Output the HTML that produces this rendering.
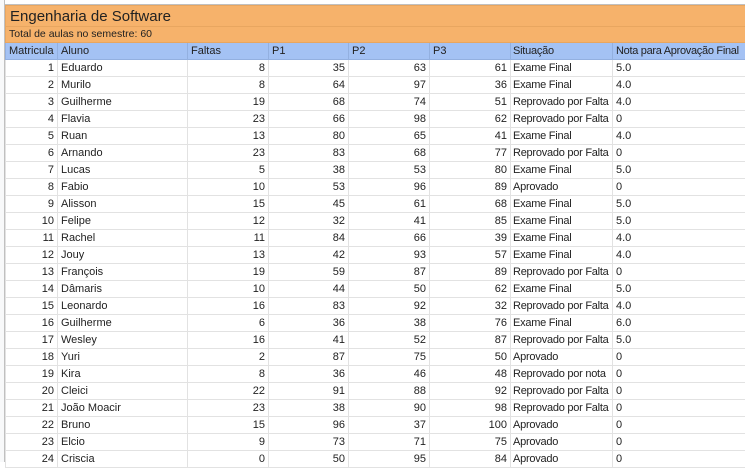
<!DOCTYPE html>
<html><head><meta charset="utf-8"><style>
*{margin:0;padding:0;box-sizing:border-box}
body{width:745px;height:462px;overflow:hidden;background:#fff;font-family:"Liberation Sans",Arial,sans-serif;color:#222;position:relative}
.lc{position:absolute;left:0;top:0;width:5px;height:462px;background:#f8f9fa;border-right:1px solid #c0c0c0}
table{position:absolute;left:5px;top:5px;width:740px;border-collapse:collapse;table-layout:fixed;font-size:11px}
td{border:1px solid #e2e2e2;height:17px;padding:0 3px;white-space:nowrap;overflow:hidden;line-height:15px}
td:nth-child(7){padding:0 2px;letter-spacing:-0.25px}
td:last-child{overflow:visible}
.h td:last-child{letter-spacing:-0.3px}
.t td{background:#f6b26b;border-color:#e8a660}
.t1 td{height:21px;font-size:15px;padding-left:4px;letter-spacing:0}
.t2 td{height:16px;font-size:10.5px;letter-spacing:0}
.h td{background:#a4c2f4;border-color:#93b0e0}
.r{text-align:right}
.top{position:absolute;left:5px;top:0;height:5px;width:740px;border-bottom:1px solid #c0c0c0}
</style></head><body>
<div class="lc"></div>
<div class="top"></div>
<table>
<colgroup><col style="width:52px"><col style="width:130px"><col style="width:81px"><col style="width:80px"><col style="width:81px"><col style="width:81px"><col style="width:102px"><col style="width:133px"></colgroup>
<tr class="t t1"><td colspan="8">Engenharia de Software</td></tr>
<tr class="t t2"><td colspan="8">Total de aulas no semestre: 60</td></tr>
<tr class="h"><td>Matricula</td><td>Aluno</td><td>Faltas</td><td>P1</td><td>P2</td><td>P3</td><td>Situação</td><td>Nota para Aprovação Final</td></tr>
<tr><td class="r">1</td><td>Eduardo</td><td class="r">8</td><td class="r">35</td><td class="r">63</td><td class="r">61</td><td>Exame Final</td><td>5.0</td></tr>
<tr><td class="r">2</td><td>Murilo</td><td class="r">8</td><td class="r">64</td><td class="r">97</td><td class="r">36</td><td>Exame Final</td><td>4.0</td></tr>
<tr><td class="r">3</td><td>Guilherme</td><td class="r">19</td><td class="r">68</td><td class="r">74</td><td class="r">51</td><td>Reprovado por Falta</td><td>4.0</td></tr>
<tr><td class="r">4</td><td>Flavia</td><td class="r">23</td><td class="r">66</td><td class="r">98</td><td class="r">62</td><td>Reprovado por Falta</td><td>0</td></tr>
<tr><td class="r">5</td><td>Ruan</td><td class="r">13</td><td class="r">80</td><td class="r">65</td><td class="r">41</td><td>Exame Final</td><td>4.0</td></tr>
<tr><td class="r">6</td><td>Arnando</td><td class="r">23</td><td class="r">83</td><td class="r">68</td><td class="r">77</td><td>Reprovado por Falta</td><td>0</td></tr>
<tr><td class="r">7</td><td>Lucas</td><td class="r">5</td><td class="r">38</td><td class="r">53</td><td class="r">80</td><td>Exame Final</td><td>5.0</td></tr>
<tr><td class="r">8</td><td>Fabio</td><td class="r">10</td><td class="r">53</td><td class="r">96</td><td class="r">89</td><td>Aprovado</td><td>0</td></tr>
<tr><td class="r">9</td><td>Alisson</td><td class="r">15</td><td class="r">45</td><td class="r">61</td><td class="r">68</td><td>Exame Final</td><td>5.0</td></tr>
<tr><td class="r">10</td><td>Felipe</td><td class="r">12</td><td class="r">32</td><td class="r">41</td><td class="r">85</td><td>Exame Final</td><td>5.0</td></tr>
<tr><td class="r">11</td><td>Rachel</td><td class="r">11</td><td class="r">84</td><td class="r">66</td><td class="r">39</td><td>Exame Final</td><td>4.0</td></tr>
<tr><td class="r">12</td><td>Jouy</td><td class="r">13</td><td class="r">42</td><td class="r">93</td><td class="r">57</td><td>Exame Final</td><td>4.0</td></tr>
<tr><td class="r">13</td><td>François</td><td class="r">19</td><td class="r">59</td><td class="r">87</td><td class="r">89</td><td>Reprovado por Falta</td><td>0</td></tr>
<tr><td class="r">14</td><td>Dâmaris</td><td class="r">10</td><td class="r">44</td><td class="r">50</td><td class="r">62</td><td>Exame Final</td><td>5.0</td></tr>
<tr><td class="r">15</td><td>Leonardo</td><td class="r">16</td><td class="r">83</td><td class="r">92</td><td class="r">32</td><td>Reprovado por Falta</td><td>4.0</td></tr>
<tr><td class="r">16</td><td>Guilherme</td><td class="r">6</td><td class="r">36</td><td class="r">38</td><td class="r">76</td><td>Exame Final</td><td>6.0</td></tr>
<tr><td class="r">17</td><td>Wesley</td><td class="r">16</td><td class="r">41</td><td class="r">52</td><td class="r">87</td><td>Reprovado por Falta</td><td>5.0</td></tr>
<tr><td class="r">18</td><td>Yuri</td><td class="r">2</td><td class="r">87</td><td class="r">75</td><td class="r">50</td><td>Aprovado</td><td>0</td></tr>
<tr><td class="r">19</td><td>Kira</td><td class="r">8</td><td class="r">36</td><td class="r">46</td><td class="r">48</td><td>Reprovado por nota</td><td>0</td></tr>
<tr><td class="r">20</td><td>Cleici</td><td class="r">22</td><td class="r">91</td><td class="r">88</td><td class="r">92</td><td>Reprovado por Falta</td><td>0</td></tr>
<tr><td class="r">21</td><td>João Moacir</td><td class="r">23</td><td class="r">38</td><td class="r">90</td><td class="r">98</td><td>Reprovado por Falta</td><td>0</td></tr>
<tr><td class="r">22</td><td>Bruno</td><td class="r">15</td><td class="r">96</td><td class="r">37</td><td class="r">100</td><td>Aprovado</td><td>0</td></tr>
<tr><td class="r">23</td><td>Elcio</td><td class="r">9</td><td class="r">73</td><td class="r">71</td><td class="r">75</td><td>Aprovado</td><td>0</td></tr>
<tr><td class="r">24</td><td>Criscia</td><td class="r">0</td><td class="r">50</td><td class="r">95</td><td class="r">84</td><td>Aprovado</td><td>0</td></tr>
</table>
</body></html>
